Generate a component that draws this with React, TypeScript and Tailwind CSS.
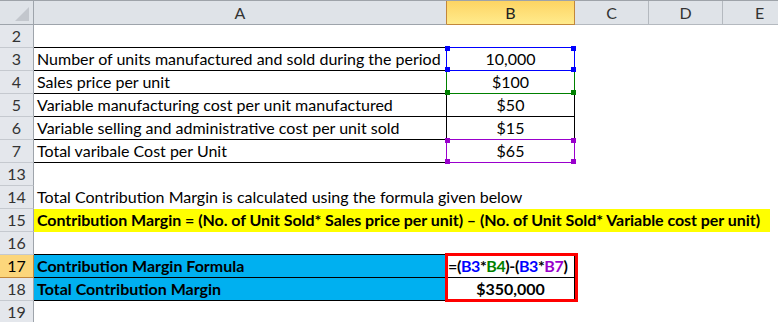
import clsx from "clsx";
import type { ReactNode } from "react";

const font = { fontFamily: "Lato, 'Open Sans', sans-serif" };

const RowHead = ({ n, active }: { n: number; active?: boolean }) => (
  <div
    className={clsx(
      "w-[34px] shrink-0 h-full border-r border-b text-center leading-[22px]",
      active
        ? "bg-[#fcd67b] border-r-[#c2873a] border-b-[#c2873a] text-black"
        : "bg-[#e4e7ec] border-r-[#9ea4ab] border-b-[#c5c9cf] text-[#333]"
    )}
  >
    {n}
  </div>
);

// corner squares drawn by Excel around a referenced range
const Handles = ({ color, top = true }: { color: string; top?: boolean }) => (
  <>
    {top && (
      <>
        <span className={clsx("absolute -left-[2px] -top-[2px] w-[5px] h-[5px]", color)} />
        <span className={clsx("absolute -right-[2px] -top-[2px] w-[5px] h-[5px]", color)} />
      </>
    )}
    <span className={clsx("absolute -left-[2px] -bottom-[2px] w-[5px] h-[5px]", color)} />
    <span className={clsx("absolute -right-[2px] -bottom-[2px] w-[5px] h-[5px]", color)} />
  </>
);

const Row = ({ children }: { children: ReactNode }) => (
  <div className="flex h-[23px] text-[16px] leading-[22px]">{children}</div>
);

const Empty = ({ w }: { w: string }) => (
  <div className={clsx("shrink-0 h-full border-b border-transparent", w)} />
);

const TableRow = ({
  n,
  label,
  value,
  overlay,
}: {
  n: number;
  label: string;
  value: string;
  overlay?: ReactNode;
}) => (
  <Row>
    <RowHead n={n} />
    <div className="w-[413px] shrink-0 h-full border-r border-b border-black pl-[3px] whitespace-nowrap text-black">
      {label}
    </div>
    <div className="relative w-[128px] shrink-0 h-full border-r border-b border-black text-center text-black">
      {value}
      {overlay}
    </div>
    <Empty w="w-[74px]" />
    <Empty w="w-[74px]" />
    <Empty w="w-[74px]" />
  </Row>
);

export default function App() {
  return (
    <div className="w-[778px] h-[322px] overflow-hidden bg-white" style={font}>
      {/* column headers */}
      <div className="flex h-[25px] border-t border-[#9ea3a9] text-[16px] leading-[23px] text-[#333]">
        <div className="relative w-[34px] shrink-0 h-full border-r border-b border-[#9ea4ab] bg-[#dfe3e8]">
          <svg className="absolute left-[15px] top-[6px]" width="14" height="14" viewBox="0 0 14 14">
            <polygon points="14,0 14,14 0,14" fill="#c3c7cd" />
          </svg>
        </div>
        <div className="w-[413px] shrink-0 h-full border-r border-r-[#c2873a] border-b border-b-[#9ea4ab] bg-[#dfe3e8] text-center">
          A
        </div>
        <div className="w-[128px] shrink-0 h-full border-r border-b border-[#c2873a] bg-gradient-to-b from-[#fdd462] to-[#ffeb8c] text-center text-[#222]">
          B
        </div>
        <div className="w-[74px] shrink-0 h-full border-r border-b border-[#b4b9bf] bg-[#dfe3e8] text-center">
          C
        </div>
        <div className="w-[74px] shrink-0 h-full border-r border-b border-[#b4b9bf] bg-[#dfe3e8] text-center">
          D
        </div>
        <div className="w-[74px] shrink-0 h-full border-r border-b border-[#b4b9bf] bg-[#dfe3e8] text-center">
          E
        </div>
      </div>

      <Row>
        <RowHead n={2} />
        <div className="w-[413px] shrink-0 h-full border-r border-transparent border-b border-b-black" />
        <div className="w-[128px] shrink-0 h-full border-r border-transparent border-b border-b-black" />
        <Empty w="w-[74px]" />
        <Empty w="w-[74px]" />
        <Empty w="w-[74px]" />
      </Row>

      <TableRow
        n={3}
        label="Number of units manufactured and sold during the period"
        value="10,000"
        overlay={
          <div className="absolute -left-px -top-px right-[-1px] bottom-[-1px] z-20 border border-[#0000ff]">
            <Handles color="bg-[#0000ff]" />
          </div>
        }
      />
      <TableRow
        n={4}
        label="Sales price per unit"
        value="$100"
        overlay={
          <div className="absolute -left-px -top-px right-[-1px] bottom-[-1px] z-10 border border-[#008000]">
            <Handles color="bg-[#008000]" top={false} />
          </div>
        }
      />
      <TableRow n={5} label="Variable manufacturing cost per unit manufactured" value="$50" />
      <TableRow n={6} label="Variable selling and administrative cost per unit sold" value="$15" />
      <TableRow
        n={7}
        label="Total varibale Cost per Unit"
        value="$65"
        overlay={
          <div className="absolute -left-px -top-px right-[-1px] bottom-[-1px] z-10 border border-[#9900cc]">
            <Handles color="bg-[#9900cc]" />
          </div>
        }
      />

      <Row>
        <RowHead n={13} />
      </Row>

      <Row>
        <RowHead n={14} />
        <div className="pl-[3px] whitespace-nowrap text-black">
          Total Contribution Margin is calculated using the formula given below
        </div>
      </Row>

      <Row>
        <RowHead n={15} />
        <div className="w-[736px] shrink-0 h-full bg-[#ffff00] pl-[3px] font-bold whitespace-nowrap tracking-[-0.05px] text-black">
          Contribution Margin = (No. of Unit Sold* Sales price per unit) – (No. of Unit Sold* Variable cost per unit)
        </div>
      </Row>

      <Row>
        <RowHead n={16} />
        <div className="w-[413px] shrink-0 h-full border-r border-transparent border-b border-b-black" />
        <div className="w-[128px] shrink-0 h-full border-r border-transparent border-b border-b-black" />
      </Row>

      <Row>
        <RowHead n={17} active />
        <div className="w-[413px] shrink-0 h-full bg-[#00b0f0] border-r border-b border-black pl-[3px] font-bold text-black">
          Contribution Margin Formula
        </div>
        <div className="relative w-[128px] shrink-0 h-full border-r border-b border-black pl-[1px] font-bold whitespace-nowrap tracking-[-0.4px]">
          <span className="text-black">=(</span>
          <span className="text-[#0000ff]">B3</span>
          <span className="text-black">*</span>
          <span className="text-[#008000]">B4</span>
          <span className="text-black">)-(</span>
          <span className="text-[#0000ff]">B3</span>
          <span className="text-black">*</span>
          <span className="text-[#9900cc]">B7</span>
          <span className="text-black">)</span>
          <div className="absolute -left-[2px] -top-[2px] w-[133px] h-[49px] border-[3px] border-[#ff0000] z-10" />
        </div>
      </Row>

      <Row>
        <RowHead n={18} />
        <div className="w-[413px] shrink-0 h-full bg-[#00b0f0] border-r border-b border-black pl-[3px] font-bold text-black">
          Total Contribution Margin
        </div>
        <div className="w-[128px] shrink-0 h-full border-r border-b border-black text-center font-bold text-black">
          $350,000
        </div>
      </Row>

      <Row>
        <RowHead n={19} />
      </Row>
    </div>
  );
}
